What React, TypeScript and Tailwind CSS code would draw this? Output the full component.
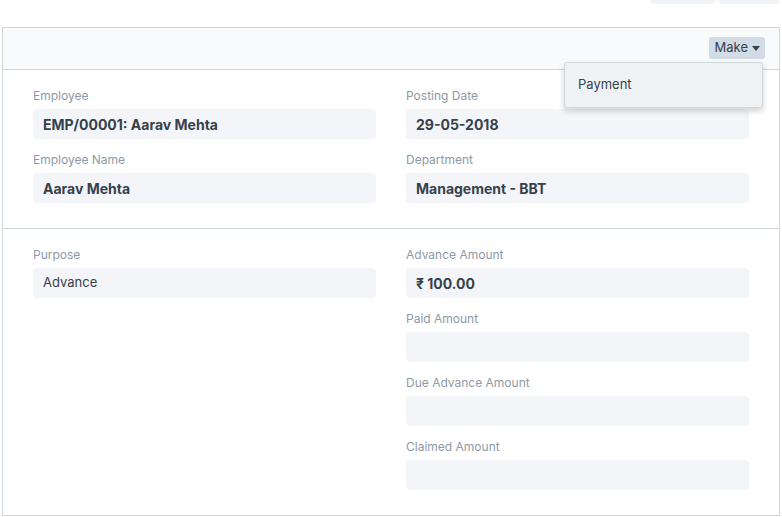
const FONT = 'font-["Inter","Noto_Sans",sans-serif]'

function Field({ label, value, bold = true }: { label: string; value?: string; bold?: boolean }) {
  return (
    <div className="flex flex-col">
      <div className="text-[12px] leading-[18px] text-[#8d99a6]">{label}</div>
      <div className="mt-[4px] h-[30px] rounded-[4px] bg-[#f4f5f8] px-[10px] flex items-center">
        {value && (
          <span className={bold ? 'text-[14px] font-bold text-[#36414c]' : 'text-[13px] text-[#36414c]'}>
            {value}
          </span>
        )}
      </div>
    </div>
  )
}

export default function App() {
  return (
    <div className={`w-[782px] h-[517px] bg-white overflow-hidden ${FONT}`}>
      {/* page actions, cut off at top */}
      <div className="h-[27px] flex justify-end gap-[4px] pr-[2px]">
        <div className="w-[65px] h-[4px] rounded-b-[4px] bg-[#f0f4f7]" />
        <div className="w-[61px] h-[4px] rounded-b-[4px] bg-[#f0f4f7]" />
      </div>

      <div className="relative ml-[2px] w-[778px] border border-[#d1d8dd]">
        {/* toolbar */}
        <div className="h-[42px] bg-[#f9fafb] border-b border-[#d1d8dd] flex items-start justify-end pr-[14px] pt-[9px]">
          <button className="h-[22px] pl-[6px] pr-[5px] rounded-[3px] bg-[#d1dce6] text-[13px] text-[#36414c] flex items-center gap-[4px]">
            Make
            <svg width="8" height="5" viewBox="0 0 8 5"><path d="M0 0h8L4 5z" fill="#36414c" /></svg>
          </button>
        </div>

        {/* dropdown */}
        <div className="absolute left-[561px] top-[34px] w-[199px] h-[46px] bg-[#eef2f5] border border-[#d1d8dd] rounded-[3px] shadow-[0_3px_6px_rgba(0,0,0,0.18)] flex items-center pl-[13px]">
          <span className="text-[13px] text-[#36414c]">Payment</span>
        </div>

        <div className="grid grid-cols-2 gap-x-[30px] gap-y-[12px] pl-[30px] pr-[30px] pt-[17px] pb-[25px] border-b border-[#d1d8dd]">
          <Field label="Employee" value="EMP/00001: Aarav Mehta" />
          <Field label="Posting Date" value="29-05-2018" />
          <Field label="Employee Name" value="Aarav Mehta" />
          <Field label="Department" value="Management - BBT" />
        </div>

        <div className="grid grid-cols-2 gap-x-[30px] pl-[30px] pr-[30px] pt-[17px] pb-[25px]">
          <div className="flex flex-col">
            <Field label="Purpose" value="Advance" bold={false} />
          </div>
          <div className="flex flex-col gap-[12px]">
            <Field label="Advance Amount" value="₹ 100.00" />
            <Field label="Paid Amount" />
            <Field label="Due Advance Amount" />
            <Field label="Claimed Amount" />
          </div>
        </div>
      </div>
    </div>
  )
}
